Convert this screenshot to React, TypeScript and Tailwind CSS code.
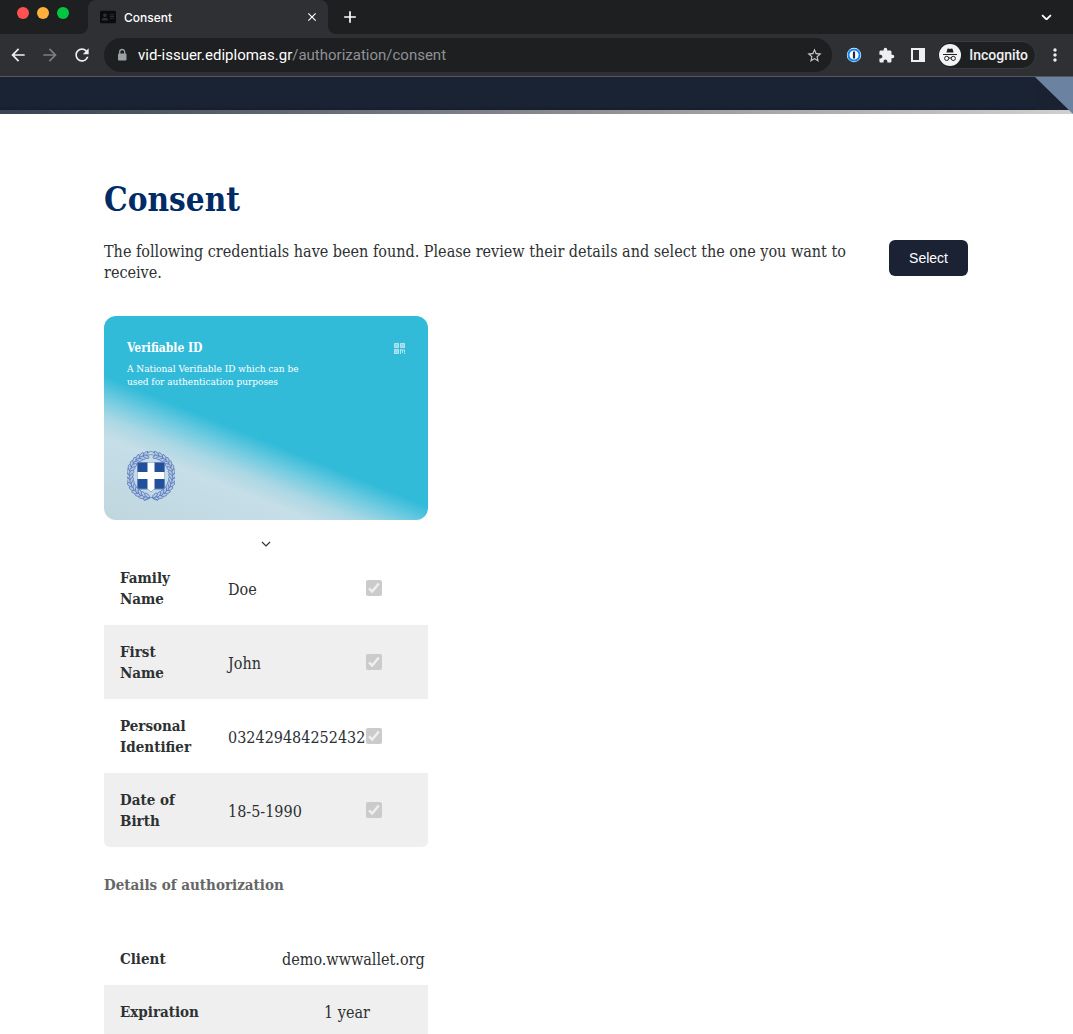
import type { ReactNode } from "react";
import {
  MdArrowBack,
  MdArrowForward,
  MdRefresh,
  MdLock,
  MdStarBorder,
  MdExtension,
  MdMoreVert,
  MdClose,
  MdAdd,
} from "react-icons/md";
import { FaAddressCard } from "react-icons/fa";

const identity = [
  { label: "Family Name", value: "Doe" },
  { label: "First Name", value: "John" },
  { label: "Personal Identifier", value: "032429484252432" },
  { label: "Date of Birth", value: "18-5-1990" },
];

function IconButton({ label, children }: { label: string; children: ReactNode }) {
  return (
    <button type="button" aria-label={label} className="grid size-5 shrink-0 place-items-center">
      {children}
    </button>
  );
}

function Chevron({ className }: { className: string }) {
  return (
    <svg viewBox="0 0 10 6" className={className} fill="none" stroke="currentColor" aria-hidden="true">
      <path d="M1 1l4 4 4-4" />
    </svg>
  );
}

function TabStrip() {
  return (
    <div className="flex h-[34px] bg-[#1e1f21] text-white">
      <div className="flex w-20 shrink-0 gap-2 pt-[7px] pl-[17px]">
        <span className="size-3 rounded-full bg-[#ff5152]" />
        <span className="size-3 rounded-full bg-[#ffb13b]" />
        <span className="size-3 rounded-full bg-[#00c73f]" />
      </div>
      <div className="flex w-2 shrink-0 bg-[#2f3034]">
        <span className="flex-1 rounded-br-lg bg-[#1e1f21]" />
      </div>
      <div className="flex w-60 items-center gap-2 rounded-t-lg bg-[#2f3034] pr-2 pl-3">
        <FaAddressCard className="size-4 text-[#0b0b0c]" />
        <span className="flex-1 font-['Inter','Roboto',sans-serif] text-[12px] font-medium">Consent</span>
        <button type="button" aria-label="Close tab" className="grid size-4 place-items-center">
          <MdClose className="size-3.5" />
        </button>
      </div>
      <div className="flex w-2 shrink-0 bg-[#2f3034]">
        <span className="flex-1 rounded-bl-lg bg-[#1e1f21]" />
      </div>
      <div className="flex flex-1 items-center justify-between pr-[17px] pl-1">
        <IconButton label="New tab">
          <MdAdd className="size-5" />
        </IconButton>
        <IconButton label="Search tabs">
          <Chevron className="w-[11px] stroke-[1.6]" />
        </IconButton>
      </div>
    </div>
  );
}

function Toolbar() {
  return (
    <div className="flex h-[43px] items-center border-b border-[#56575a] bg-[#2f3034] pr-2 pl-2 font-['Roboto',sans-serif] text-[#eeeff1]">
      <div className="flex gap-3">
        <IconButton label="Back">
          <MdArrowBack className="size-5" />
        </IconButton>
        <IconButton label="Forward">
          <MdArrowForward className="size-5 text-[#7d7e81]" />
        </IconButton>
        <IconButton label="Reload">
          <MdRefresh className="size-5" />
        </IconButton>
      </div>
      <div className="ml-3 flex h-[34px] min-w-0 flex-1 items-center rounded-full bg-[#1e1f21] pr-2 pl-2.5">
        <svg viewBox="0 0 16 16" className="size-4 shrink-0 text-[#9aa0a6]" aria-hidden="true">
          <rect x="4" y="6.5" width="8.500" height="7" rx="1" fill="currentColor" />
          <path d="M5.700 7V5a2.500 2.500 0 0 1 5 0v2" fill="none" stroke="currentColor" strokeWidth="1.3" />
        </svg>
        <div
          role="textbox"
          aria-label="Address"
          aria-readonly="true"
          className="ml-2 min-w-0 flex-1 truncate text-[15px] text-[#8f9195]"
        >
          <span className="text-white">vid-issuer.ediplomas.gr</span>/authorization/consent
        </div>
        <IconButton label="Bookmark this tab">
          <MdStarBorder className="size-[17px] text-[#c9cacd]" />
        </IconButton>
      </div>
      <div className="ml-3 flex items-center gap-3">
        <IconButton label="Password manager">
          <svg viewBox="0 0 16 16" className="size-4" aria-hidden="true">
            <circle cx="8" cy="8" r="7.2" fill="#fff" />
            <circle cx="8" cy="8" r="5.6" fill="#fff" stroke="#0d84f2" strokeWidth="2" />
            <rect x="6.9" y="4.6" width="2.2" height="6.8" rx=".5" fill="#1c2b45" />
          </svg>
        </IconButton>
        <IconButton label="Extensions">
          <MdExtension className="size-[17px]" />
        </IconButton>
        <IconButton label="Side panel">
          <svg viewBox="0 0 14 14" className="size-3.5" aria-hidden="true">
            <path d="M0 0h14v14H0zM2 2v10h6V2z" fill="currentColor" fillRule="evenodd" />
          </svg>
        </IconButton>
      </div>
      <button
        type="button"
        className="ml-[9px] flex h-7 items-center gap-2 rounded-full border border-[#3a3b3f] bg-[#1e1f21] pr-[7px] pl-px text-[14px] font-medium"
      >
        <svg viewBox="0 0 22 22" className="size-[22px]" fill="none" stroke="#202124" aria-hidden="true">
          <circle cx="11" cy="11" r="11" fill="#f1f3f4" stroke="none" />
          <path d="M7.4 8.6l1-3.7c.1-.4.5-.6.9-.4l1.7.5 1.7-.5c.4-.2.8 0 .9.4l1 3.7z" fill="#202124" stroke="none" />
          <path d="M4 10.5h14" />
          <circle cx="7.7" cy="14.4" r="2.1" />
          <circle cx="14.3" cy="14.4" r="2.1" />
          <path d="M9.8 14.2q1.2-.8 2.4 0" />
        </svg>
        Incognito
      </button>
      <div className="ml-[9px]">
        <IconButton label="Menu">
          <MdMoreVert className="size-5" />
        </IconButton>
      </div>
    </div>
  );
}

function Emblem() {
  const angles = Array.from({ length: 15 }, (_, i) => 12 + i * 11);
  return (
    <svg viewBox="0 0 48 52" className="h-[52px] w-12" role="img" aria-label="National emblem of Greece">
      <g fill="#b3c6e4" stroke="#4f72b5" strokeWidth=".7">
        {angles.map((a) => (
          <g key={a}>
            <g transform={`rotate(${a} 24 26) translate(24 4.5)`}>
              <ellipse rx="3.2" ry="1.5" transform="rotate(28) translate(0 -1.5)" />
              <ellipse rx="3.2" ry="1.5" transform="rotate(-28) translate(0 1.9)" />
            </g>
            <g transform={`rotate(${-a} 24 26) translate(24 4.5)`}>
              <ellipse rx="3.2" ry="1.5" transform="rotate(-28) translate(0 -1.5)" />
              <ellipse rx="3.2" ry="1.5" transform="rotate(28) translate(0 1.9)" />
            </g>
          </g>
        ))}
        <path d="M20 2.5q4-2 8 0M20 5.5q4-2 8 0M17 50.5q4-3 7-3t7 3" fill="none" />
      </g>
      <path d="M10 12h28v25q0 2.500-2.500 2.500H27L24 42l-3-2.500h-8.500Q10 39.500 10 37z" fill="#5d7fbb" />
      <path d="M11 13h26v24q0 1.500-1.500 1.500H27L24 41l-3-2.500h-8.500Q11 38.500 11 37z" fill="#23509a" />
      <path d="M20.500 12.500h7V22H37.500v7h-10v9.700L24 41.500l-3.500-2.800V29h-10v-7h10z" fill="#fff" />
    </svg>
  );
}

function CredentialCard() {
  return (
    <div className="flex h-[204px] flex-col justify-between rounded-xl bg-[linear-gradient(202deg,#32bbd9_57%,#6fcbe0_63%,#a9d7e4_69%,#c6dee7_75%,#bfd6df_100%)] px-[23px] pt-6 pb-[18px] text-white">
      <div className="flex items-start justify-between">
        <div>
          <h2 className="text-[12px] leading-[17px] font-bold">Verifiable ID</h2>
          <p className="mt-[5px] w-44 text-[10px] leading-[13px]">
            A National Verifiable ID which can be used for authentication purposes
          </p>
        </div>
        <svg viewBox="0 0 11 11" className="mt-[3px] size-[11px]" fill="#8fd7e8" stroke="#b5e4ef" aria-hidden="true">
          <path d="M.5.5h4v4h-4zM6.500.5h4v4h-4zM.5 6.500h4v4h-4z" />
          <path d="M2 2.500h1M8 2.500h1M2 8.500h1M6 7h5M6.500 6v5M8.500 7v2.500M8 9.500h1M10.500 7v2.500M10 10.500h1" fill="none" />
        </svg>
      </div>
      <Emblem />
    </div>
  );
}

function DisabledCheck({ label }: { label: string }) {
  return (
    <span className="mx-auto grid size-4">
      <input
        type="checkbox"
        defaultChecked
        disabled
        aria-label={label}
        className="col-start-1 row-start-1 size-4 appearance-none rounded-[2px] bg-[#cbcbcb]"
      />
      <svg
        viewBox="0 0 16 16"
        className="pointer-events-none col-start-1 row-start-1 size-4"
        fill="none"
        stroke="#f0f0f0"
        strokeWidth="2.4"
        aria-hidden="true"
      >
        <path d="M3 8.300l3.200 3.200L12.800 3.500" />
      </svg>
    </span>
  );
}

export default function App() {
  return (
    <div className="flex h-screen flex-col overflow-hidden bg-white font-['DejaVu_Serif_Condensed','DejaVu_Serif',serif] text-[16px] leading-[21px] text-[#2d3133]">
      <div className="shrink-0">
        <TabStrip />
        <Toolbar />
      </div>
      <header className="flex shrink-0 bg-[linear-gradient(90deg,#3a4353,#85888d_50%,#d0d0cc)]">
        <div className="flex flex-1 flex-col">
          <div className="h-[33px] bg-[linear-gradient(180deg,#1a2333_88%,#161e2d)]" />
          <div className="h-1" />
        </div>
        <svg viewBox="0 0 38 37" className="h-[37px] w-[38px]" aria-hidden="true">
          <path d="M0 0h38v33H0z" fill="#1a2232" />
          <path d="M0 0h38v37z" fill="#6b82a0" />
        </svg>
      </header>
      <main className="min-h-0 flex-1 pt-16 pr-[105px] pl-26">
        <h1 className="text-[33px] leading-[43px] font-bold text-[#002b66]">Consent</h1>
        <div className="mt-[19px] flex items-start gap-6">
          <p className="flex-1 pt-px">
            The following credentials have been found. Please review their details and select the one you want to
            receive.
          </p>
          <button
            type="button"
            className="h-9 rounded-md bg-[#1a2233] px-5 font-['Liberation_Sans',Arial,sans-serif] text-[14px] text-white"
          >
            Select
          </button>
        </div>
        <section className="mt-[33px] w-81">
          <CredentialCard />
          <button type="button" aria-label="Toggle details" className="flex h-[31px] w-full items-center justify-center pt-4">
            <Chevron className="w-2.5 stroke-[1.2]" />
          </button>
          <div className="overflow-hidden rounded-md">
            <table className="w-full table-fixed">
              <tbody>
                {identity.map((row) => (
                  <tr key={row.label} className="even:bg-[#efefef]">
                    <th scope="row" className="px-4 pt-[17px] pb-[15px] text-left text-[15px] font-bold">
                      {row.label}
                    </th>
                    <td className="px-4 pt-[17px] pb-[15px]">{row.value}</td>
                    <td className="p-4">
                      <DisabledCheck label={row.label} />
                    </td>
                  </tr>
                ))}
              </tbody>
            </table>
          </div>
          <h3 className="mt-7 text-[15px] font-bold text-[#666]">Details of authorization</h3>
          <div className="mt-9 overflow-hidden rounded-md">
            <table className="w-full table-fixed">
              <tbody>
                <tr>
                  <th scope="row" className="px-4 pt-[17px] pb-[15px] text-left text-[15px] font-bold">
                    Client
                  </th>
                  <td className="px-4 pt-[17px] pb-[15px]">demo.wwwallet.org</td>
                </tr>
                <tr className="bg-[#efefef]">
                  <th scope="row" className="px-4 pt-[17px] pb-[15px] text-left text-[15px] font-bold">
                    Expiration
                  </th>
                  <td className="px-4 pt-[17px] pb-[15px] text-center">1 year</td>
                </tr>
              </tbody>
            </table>
          </div>
        </section>
      </main>
    </div>
  );
}
